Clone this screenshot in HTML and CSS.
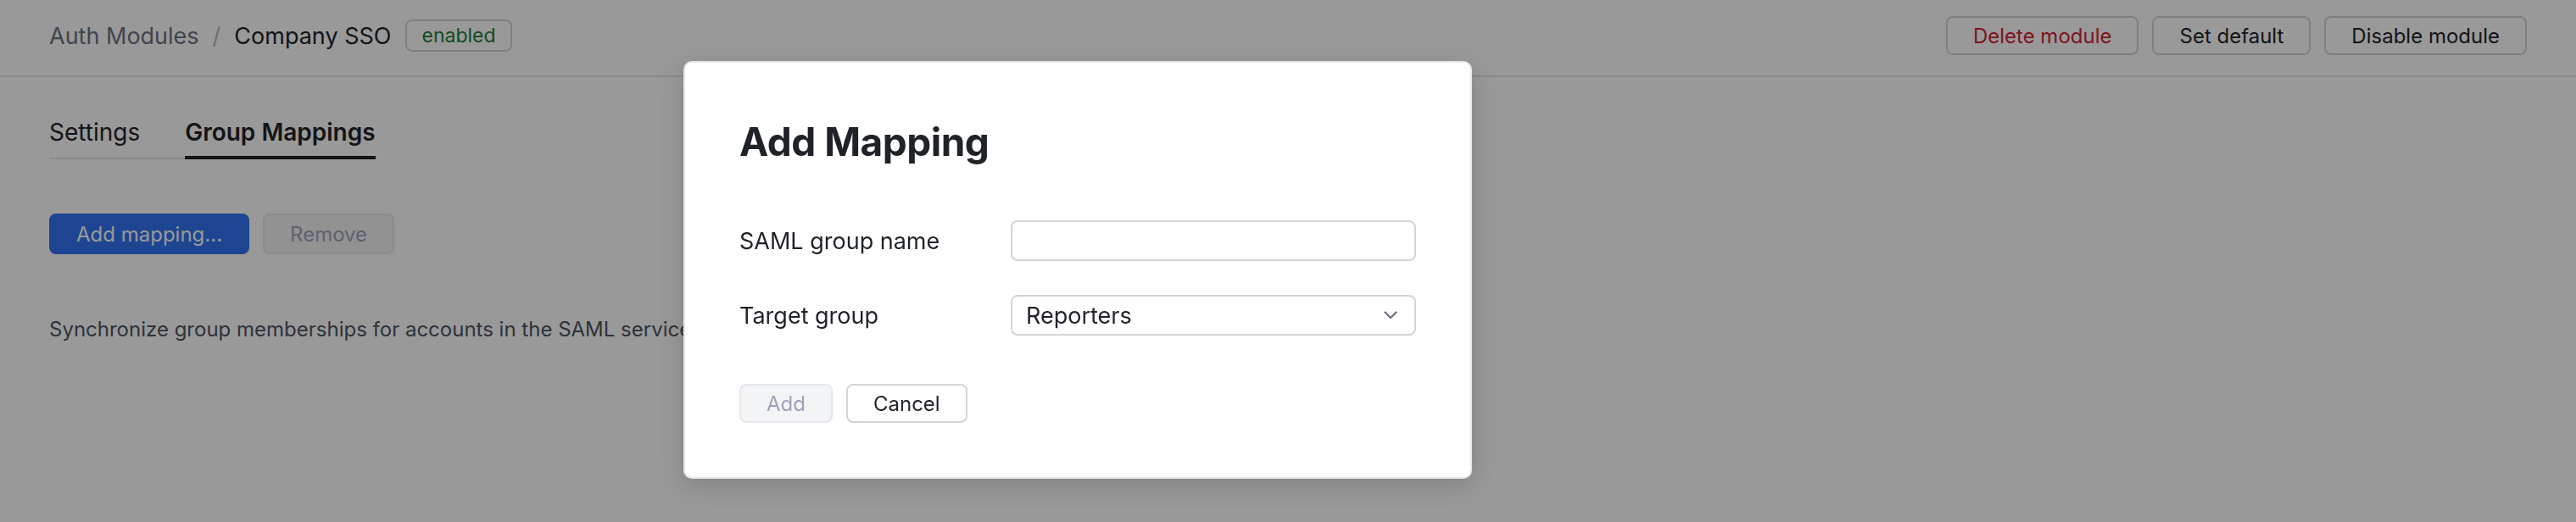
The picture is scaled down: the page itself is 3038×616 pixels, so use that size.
FILE: index.html
```html
<!DOCTYPE html>
<html lang="en">
<head>
    <meta charset="UTF-8">
    <meta name="viewport" content="width=device-width, initial-scale=1.0">
    <title>Company SSO - Group Mappings</title>
    <link rel="stylesheet" href="styles.css">
</head>
<body>
    <!-- Top bar with breadcrumb and module actions -->
    <header class="topbar">
        <div class="crumbs">
            <span class="crumb-parent">Auth Modules</span>
            <span class="crumb-sep">/</span>
            <span class="crumb-current">Company SSO</span>
            <span class="badge">enabled</span>
        </div>
        <div class="top-actions">
            <button class="btn btn-danger">Delete module</button>
            <button class="btn">Set default</button>
            <button class="btn">Disable module</button>
        </div>
    </header>

    <main class="content">
        <nav class="tabs">
            <a class="tab">Settings</a>
            <a class="tab active">Group Mappings</a>
        </nav>

        <div class="actions">
            <button class="btn btn-primary">Add mapping...</button>
            <button class="btn btn-disabled" disabled>Remove</button>
        </div>

        <p class="description">Synchronize group memberships for accounts in the SAML service provider with groups in this workspace.</p>
    </main>

    <!-- Modal -->
    <div class="overlay"></div>
    <div class="modal">
        <h2>Add Mapping</h2>
        <form class="mapping-form">
            <div class="form-row">
                <label for="samlGroup">SAML group name</label>
                <input type="text" id="samlGroup" name="samlGroup">
            </div>
            <div class="form-row">
                <label for="targetGroup">Target group</label>
                <div class="select-wrap">
                    <select id="targetGroup" name="targetGroup">
                        <option>Reporters</option>
                        <option>Developers</option>
                        <option>Admins</option>
                    </select>
                    <svg class="chevron" width="16" height="10" viewBox="0 0 16 10">
                        <path d="M1.5 1.5 L8 8 L14.5 1.5" fill="none" stroke="#6b7280" stroke-width="2.2" stroke-linecap="round" stroke-linejoin="round"/>
                    </svg>
                </div>
            </div>
            <div class="form-buttons">
                <button type="submit" class="btn btn-disabled" disabled>Add</button>
                <button type="button" class="btn">Cancel</button>
            </div>
        </form>
    </div>
</body>
</html>
```

FILE: styles.css
```css
/* General */
body {
    margin: 0;
    font-family: Inter, "Noto Sans", sans-serif;
    color: #1f2328;
    background-color: #ffffff;
    height: 616px;
    overflow: hidden;
}

/* Top bar */
.topbar {
    display: flex;
    justify-content: space-between;
    align-items: center;
    padding: 19px 58px 24px;
    border-bottom: 2px solid #e5e7eb;
}

.crumbs {
    display: flex;
    align-items: center;
    font-size: 27px;
}

.crumb-parent {
    color: #6b7280;
}

.crumb-sep {
    color: #b4b9c2;
    margin: 0 16px;
}

.crumb-current {
    color: #1f2328;
}

.badge {
    margin-left: 17px;
    height: 34px;
    line-height: 34px;
    padding: 0 17px;
    border: 2px solid #d1d5db;
    border-radius: 8px;
    font-size: 23px;
    color: #1a7f37;
}

.top-actions {
    display: flex;
    gap: 16px;
}

/* Buttons */
.btn {
    font-family: inherit;
    font-size: 24px;
    height: 46px;
    padding: 0 30px;
    border: 2px solid #d1d5db;
    border-radius: 8px;
    background-color: #ffffff;
    color: #1f2328;
    cursor: pointer;
}

.btn-danger {
    color: #d1242f;
}

.btn-primary {
    background-color: #3273f2;
    border-color: #3273f2;
    color: #ffffff;
}

.btn-disabled {
    background-color: #f3f4f6;
    border-color: #e5e7eb;
    color: #9ca3b8;
    cursor: default;
}

.actions .btn {
    height: 48px;
}

/* Content */
.content {
    padding: 0 58px;
}

.tabs {
    display: inline-flex;
    gap: 53px;
    margin-top: 48px;
    border-bottom: 2px solid #e5e7eb;
}

.tab {
    font-size: 28px;
    color: #1f2328;
    padding-bottom: 11px;
    border-bottom: 4px solid transparent;
    margin-bottom: -2px;
}

.tab.active {
    font-weight: 600;
    border-bottom-color: #1f2328;
}

.actions {
    display: flex;
    gap: 16px;
    margin-top: 64px;
}

.description {
    font-size: 24px;
    color: #4b5563;
    margin: 74px 0 0;
}

/* Modal */
.overlay {
    position: fixed;
    inset: 0;
    background-color: rgba(0, 0, 0, 0.4);
}

.modal {
    position: absolute;
    left: 806px;
    top: 72px;
    width: 798px;
    padding: 64px;
    background-color: #ffffff;
    border: 2px solid #e5e7eb;
    border-radius: 10px;
    box-shadow: 0 8px 30px rgba(0, 0, 0, 0.15);
}

.modal h2 {
    margin: 0 0 64px;
    font-size: 46px;
    font-weight: 700;
    letter-spacing: -0.5px;
    line-height: 58px;
    color: #1f2328;
}

.form-row {
    display: grid;
    grid-template-columns: 320px 1fr;
    align-items: center;
    margin-bottom: 40px;
}

.form-row label {
    font-size: 27px;
    color: #1f2328;
}

.form-row input,
.form-row select {
    width: 100%;
    box-sizing: border-box;
    height: 48px;
    padding: 0 16px;
    font-family: inherit;
    font-size: 27px;
    color: #1f2328;
    border: 2px solid #d1d5db;
    border-radius: 8px;
    background-color: #ffffff;
    outline: none;
}

.select-wrap {
    position: relative;
}

.form-row select {
    appearance: none;
}

.chevron {
    position: absolute;
    right: 22px;
    top: 19px;
}

.form-buttons {
    display: flex;
    gap: 16px;
    margin-top: 57px;
}
```
